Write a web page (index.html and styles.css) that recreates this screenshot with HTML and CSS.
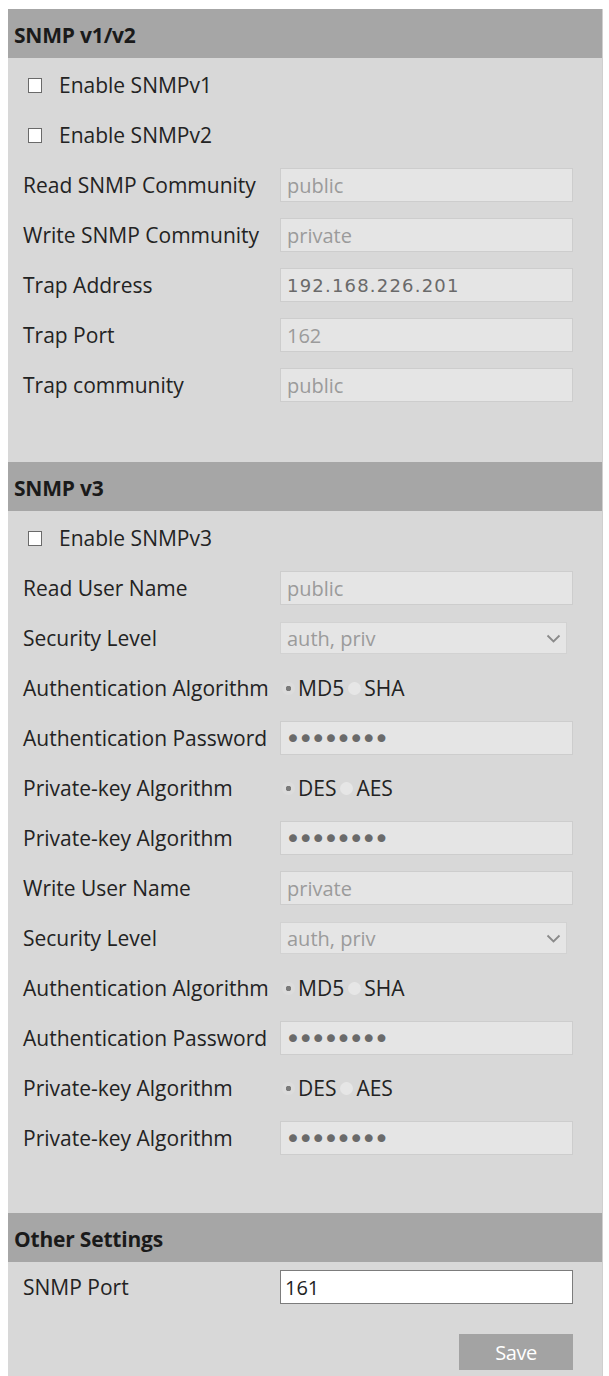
FILE: index.html
```html
<!DOCTYPE html>
<html>
<head>
<meta charset="utf-8">
<link rel="stylesheet" href="styles.css">
</head>
<body>
<div class="panel">
  <div class="section-head">SNMP v1/v2</div>
  <div class="section-body">
    <div class="row"><label class="check"><input type="checkbox"><span>Enable SNMPv1</span></label></div>
    <div class="row"><label class="check"><input type="checkbox"><span>Enable SNMPv2</span></label></div>
    <div class="row"><span class="label">Read SNMP Community</span><input class="field" type="text" value="public" disabled></div>
    <div class="row"><span class="label">Write SNMP Community</span><input class="field" type="text" value="private" disabled></div>
    <div class="row"><span class="label">Trap Address</span><input class="field field-ip" type="text" value="192.168.226.201" disabled></div>
    <div class="row"><span class="label">Trap Port</span><input class="field" type="text" value="162" disabled></div>
    <div class="row"><span class="label">Trap community</span><input class="field" type="text" value="public" disabled></div>
  </div>

  <div class="section-head">SNMP v3</div>
  <div class="section-body">
    <div class="row"><label class="check"><input type="checkbox"><span>Enable SNMPv3</span></label></div>
    <div class="row"><span class="label">Read User Name</span><input class="field" type="text" value="public" disabled></div>
    <div class="row"><span class="label">Security Level</span>
      <div class="select-wrap">
        <select class="select" disabled><option>auth, priv</option></select>
        <svg class="chev" width="15" height="9" viewBox="0 0 15 9"><path d="M1.5 1.5 L7.5 7.5 L13.5 1.5" fill="none" stroke="#8a8a8a" stroke-width="1.8"/></svg>
      </div>
    </div>
    <div class="row"><span class="label">Authentication Algorithm</span>
      <div class="radios">
        <label class="radio"><input type="radio" name="a1" checked disabled><span>MD5</span></label>
        <label class="radio"><input type="radio" name="a1" disabled><span>SHA</span></label>
      </div>
    </div>
    <div class="row"><span class="label">Authentication Password</span><input class="field field-pw" type="password" value="12345678" disabled></div>
    <div class="row"><span class="label">Private-key Algorithm</span>
      <div class="radios">
        <label class="radio"><input type="radio" name="p1" checked disabled><span>DES</span></label>
        <label class="radio"><input type="radio" name="p1" disabled><span>AES</span></label>
      </div>
    </div>
    <div class="row"><span class="label">Private-key Algorithm</span><input class="field field-pw" type="password" value="12345678" disabled></div>
    <div class="row"><span class="label">Write User Name</span><input class="field" type="text" value="private" disabled></div>
    <div class="row"><span class="label">Security Level</span>
      <div class="select-wrap">
        <select class="select" disabled><option>auth, priv</option></select>
        <svg class="chev" width="15" height="9" viewBox="0 0 15 9"><path d="M1.5 1.5 L7.5 7.5 L13.5 1.5" fill="none" stroke="#8a8a8a" stroke-width="1.8"/></svg>
      </div>
    </div>
    <div class="row"><span class="label">Authentication Algorithm</span>
      <div class="radios">
        <label class="radio"><input type="radio" name="a2" checked disabled><span>MD5</span></label>
        <label class="radio"><input type="radio" name="a2" disabled><span>SHA</span></label>
      </div>
    </div>
    <div class="row"><span class="label">Authentication Password</span><input class="field field-pw" type="password" value="12345678" disabled></div>
    <div class="row"><span class="label">Private-key Algorithm</span>
      <div class="radios">
        <label class="radio"><input type="radio" name="p2" checked disabled><span>DES</span></label>
        <label class="radio"><input type="radio" name="p2" disabled><span>AES</span></label>
      </div>
    </div>
    <div class="row"><span class="label">Private-key Algorithm</span><input class="field field-pw" type="password" value="12345678" disabled></div>
  </div>

  <div class="section-head">Other Settings</div>
  <div class="section-body last">
    <div class="row"><span class="label">SNMP Port</span><input class="field field-active" type="text" value="161"></div>
    <div class="actions"><button class="btn" type="button">Save</button></div>
  </div>
</div>
</body>
</html>
```

FILE: styles.css
```css
html, body {
  margin: 0;
  padding: 0;
  background: #ffffff;
}
body {
  padding: 9px 7px 0 8px;
  font-family: "Open Sans", "Noto Sans", sans-serif;
  color: #232323;
}
.panel {
  width: 594px;
  background: #d8d8d8;
  border-right: 1px solid #cfcfcf;
}
.section-head {
  height: 49px;
  background: #a6a6a6;
  display: flex;
  align-items: center;
  padding: 3px 0 0 6px;
  box-sizing: border-box;
  font-weight: 700;
  font-size: 21px;
  color: #1a1a1a;
  letter-spacing: -0.2px;
}
.section-body {
  padding: 2px 0 52px 0;
}
.section-body + .section-head + .section-body {
  padding-bottom: 50px;
}
.section-body.last {
  padding: 0 0 4px 0;
}
.row {
  height: 50px;
  display: flex;
  align-items: center;
  padding-left: 15px;
  font-size: 21px;
}
.label {
  width: 257px;
  flex: none;
  white-space: nowrap;
}
.check {
  display: flex;
  align-items: center;
  padding-left: 4px;
}
.check input {
  appearance: none;
  -webkit-appearance: none;
  width: 14px;
  height: 15px;
  margin: 0 17px 0 1px;
  border: 1px solid #6a6a6a;
  background: #ffffff;
  box-sizing: border-box;
}
.field {
  width: 293px;
  height: 34px;
  box-sizing: border-box;
  margin: 0;
  padding: 0 6px;
  border: 1px solid #cdcdcd;
  background: #e5e5e5;
  font-family: "Open Sans", "Noto Sans", sans-serif;
  font-size: 20px;
  color: #9b9b9b;
  outline: none;
}
.field:disabled {
  color: #9b9b9b;
  -webkit-text-fill-color: #9b9b9b;
  opacity: 1;
}
.field-ip:disabled {
  font-family: "DejaVu Sans", sans-serif;
  font-size: 18px;
  letter-spacing: 1.2px;
  color: #6a6a6a;
  -webkit-text-fill-color: #6a6a6a;
}
.field-pw:disabled {
  color: #6a6a6a;
  -webkit-text-fill-color: #6a6a6a;
  font-family: "DejaVu Sans", sans-serif;
  font-size: 27px;
  letter-spacing: -3.3px;
  padding-left: 4px;
}
.field-active {
  background: #ffffff;
  border: 1px solid #7c7c7c;
  color: #222222;
  padding-left: 4px;
}
.select-wrap {
  position: relative;
  width: 287px;
  height: 32px;
}
.select {
  appearance: none;
  -webkit-appearance: none;
  width: 100%;
  height: 100%;
  margin: 0;
  padding: 0 6px;
  border: 1px solid #d2d2d2;
  background: #e5e5e5;
  font-family: "Open Sans", "Noto Sans", sans-serif;
  font-size: 20px;
  color: #9b9b9b;
  opacity: 1;
}
.chev {
  position: absolute;
  right: 6px;
  top: 12px;
}
.radios {
  display: flex;
  align-items: center;
  padding-left: 2px;
}
.radio {
  display: flex;
  align-items: center;
}
.radio input {
  appearance: none;
  -webkit-appearance: none;
  width: 13px;
  height: 13px;
  margin: 0 3px 0 0;
  border-radius: 50%;
  background: #e6e6e6;
  border: none;
}
.radio input:checked {
  background: radial-gradient(circle, #7a7a7a 0 2.5px, #dcdcdc 3px);
}
.radio + .radio {
  margin-left: 4px;
}
.actions {
  display: flex;
  justify-content: flex-end;
  padding: 22px 29px 0 0;
}
.btn {
  width: 114px;
  height: 36px;
  border: none;
  background: #a3a3a3;
  color: #ffffff;
  font-family: "Open Sans", "Noto Sans", sans-serif;
  font-size: 20px;
  letter-spacing: -0.5px;
  padding: 0;
}
```
